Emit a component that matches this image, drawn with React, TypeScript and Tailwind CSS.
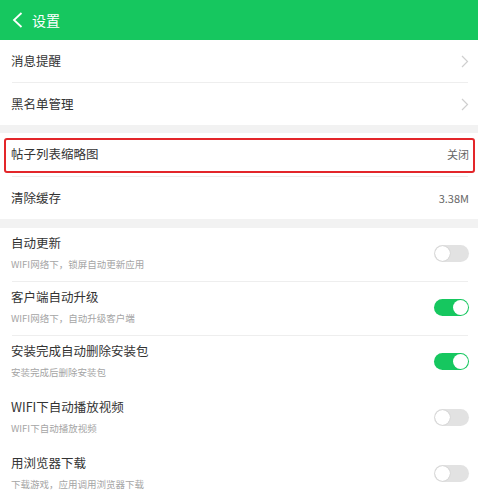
const font = "font-['Noto_Sans_CJK_SC','Noto_Sans',sans-serif]";

function ChevronRight() {
  return (
    <svg width="8" height="13" viewBox="0 0 8 13" fill="none">
      <path d="M1 1l5.5 5.5L1 12" stroke="#cfcfcf" strokeWidth="1.2" />
    </svg>
  );
}

function Toggle({ on }: { on: boolean }) {
  return (
    <div
      className={[
        "relative mt-[17px] h-[17px] w-[35px] rounded-full",
        on ? "bg-[#16c75f]" : "bg-[#e2e2e2]",
      ].join(" ")}
    >
      <div
        className={[
          "absolute top-[1px] h-[15px] w-[15px] rounded-full bg-white",
          on ? "right-[1px]" : "left-[1px] shadow-[0_0_1px_rgba(0,0,0,0.3)]",
        ].join(" ")}
      />
    </div>
  );
}

const switches = [
  { title: "自动更新", sub: "WIFI网络下，锁屏自动更新应用", on: false, line: true },
  { title: "客户端自动升级", sub: "WIFI网络下，自动升级客户端", on: true, line: true },
  { title: "安装完成自动删除安装包", sub: "安装完成后删除安装包", on: true, line: false },
  { title: "WIFI下自动播放视频", sub: "WIFI下自动播放视频", on: false, line: false },
  { title: "用浏览器下载", sub: "下载游戏，应用调用浏览器下载", on: false, line: false },
];

export default function App() {
  return (
    <div className={`w-[478px] h-[497px] overflow-hidden bg-white ${font}`}>
      {/* 顶部栏 */}
      <header className="h-[40px] bg-[#16c75f] flex items-center pl-[11px] gap-[9px]">
        <svg width="12" height="18" viewBox="0 0 12 18" fill="none">
          <path d="M10.5 2L3 9l7.5 7" stroke="white" strokeWidth="1.8" />
        </svg>
        <span className="text-white text-[14px] leading-none">设置</span>
      </header>

      <section className="bg-white">
        <div className="h-[42px] flex items-center justify-between pl-[11px] pr-[9px] text-[12.5px] text-[#333]">
          <span>消息提醒</span>
          <ChevronRight />
        </div>
        <div className="ml-[12px] mr-[10px] h-px bg-[#eeeeee]" />
        <div className="h-[42px] flex items-center justify-between pl-[11px] pr-[9px] text-[12.5px] text-[#333]">
          <span>黑名单管理</span>
          <ChevronRight />
        </div>
      </section>

      <div className="h-[8px] bg-[#f2f2f2]" />

      <section className="bg-white">
        <div className="relative h-[43px] flex items-center justify-between pl-[11px] pr-[9px] text-[#333]">
          <span className="text-[12.5px]">帖子列表缩略图</span>
          <span className="text-[11px] text-[#666]">关闭</span>
          <div className="absolute left-[4px] right-[3px] top-[5px] bottom-[3px] rounded-[3px] border-2 border-[#e3262a]" />
        </div>
        <div className="ml-[12px] mr-[10px] h-px bg-[#eeeeee]" />
        <div className="h-[42px] flex items-center justify-between pl-[11px] pr-[9px] text-[#333]">
          <span className="text-[12.5px]">清除缓存</span>
          <span className="text-[11px] text-[#666]">3.38M</span>
        </div>
      </section>

      <div className="h-[9px] bg-[#f2f2f2]" />

      <section className="bg-white">
        {switches.map((s) => (
          <div key={s.title}>
            <div
              className={[
                "flex items-start justify-between pl-[11px] pr-[9px]",
                s.line ? "h-[53px]" : "h-[56px]",
              ].join(" ")}
            >
              <div className="flex flex-col pt-[7px]">
                <span className="text-[12.5px] leading-[16px] text-[#333]">{s.title}</span>
                <span className="mt-[6px] text-[9.5px] leading-[14px] text-[#a5a5a5]">{s.sub}</span>
              </div>
              <Toggle on={s.on} />
            </div>
            {s.line && <div className="ml-[12px] mr-[10px] h-px bg-[#eeeeee]" />}
          </div>
        ))}
      </section>
    </div>
  );
}
